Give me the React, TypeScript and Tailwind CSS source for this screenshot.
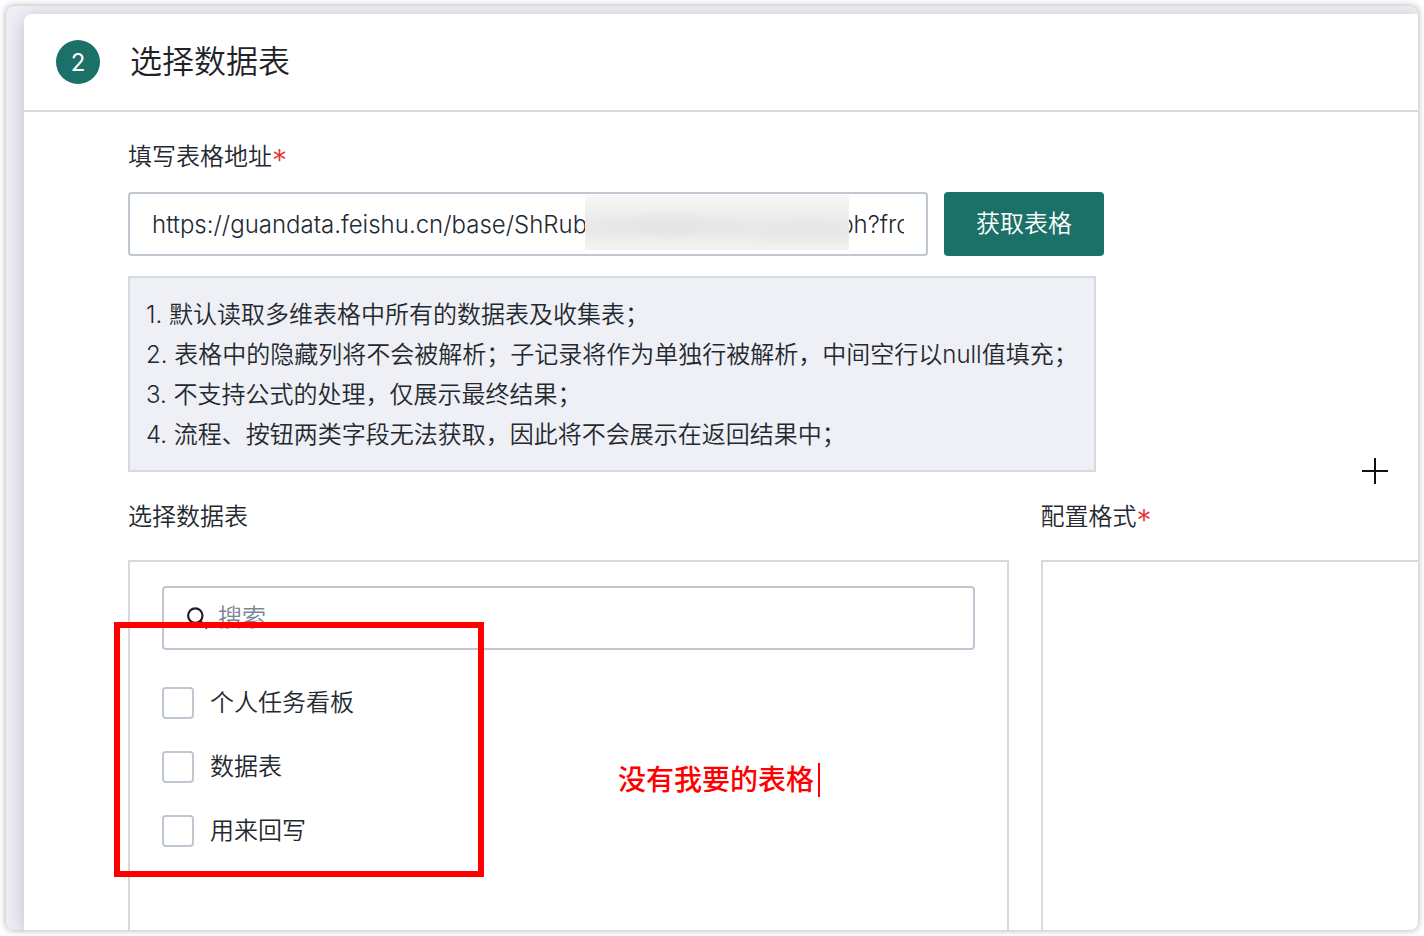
import React from "react";

const notes = [
  "默认读取多维表格中所有的数据表及收集表；",
  "表格中的隐藏列将不会被解析；子记录将作为单独行被解析，中间空行以null值填充；",
  "不支持公式的处理，仅展示最终结果；",
  "流程、按钮两类字段无法获取，因此将不会展示在返回结果中；",
];

const tables = ["个人任务看板", "数据表", "用来回写"];

const tableUrl =
  "https://guandata.feishu.cn/base/ShRub" + "\u2003".repeat(10) + "\u2002" + "ph?from=from_copylink";

function Required() {
  return <span className="align-[-6px] text-[30px] leading-none text-[#e53030]">*</span>;
}

function SearchIcon() {
  return (
    <svg viewBox="0 0 24 24" fill="none" className="size-6 shrink-0 text-[#1f2329]" stroke="currentColor" strokeWidth="2.2" aria-hidden="true">
      <circle cx="11.3" cy="9.6" r="7.2" />
      <path d="M16.2 14.8 L23 22.4" />
    </svg>
  );
}

function Header() {
  return (
    <header className="flex items-center gap-[30px] border-b-2 border-[#d5d9e0] px-8 py-[26px]">
      <span className="flex size-11 items-center justify-center rounded-full bg-[#1b7068] pt-px text-2xl font-normal text-white">2</span>
      <h1 className="text-[32px] leading-[44px] text-[#1f2329]">选择数据表</h1>
    </header>
  );
}

function AddressField() {
  return (
    <div>
      <label htmlFor="address" className="block h-10 leading-10">
        填写表格地址
        <Required />
      </label>
      <div className="mt-[15px] flex gap-4">
        <div className="relative w-full max-w-[800px]">
          <input
            id="address"
            type="text"
            defaultValue={tableUrl}
            className="block h-16 w-full rounded border-2 border-[#bfc7d2] bg-white px-[22px] outline-none"
          />
          <div className="absolute top-[3px] left-[457px] h-[55px] w-[264px] bg-[#efefef] bg-[radial-gradient(ellipse_at_32%_55%,#e3e4e5_0%,transparent_35%),radial-gradient(ellipse_at_84%_65%,#e6e7e7_0%,transparent_32%),linear-gradient(#f7f7f7,#ebebeb_45%,#e9e9e9_65%,#f3f3f3)]" />
        </div>
        <button type="button" className="h-16 w-40 shrink-0 rounded bg-[#1b7068] text-white">
          获取表格
        </button>
      </div>
    </div>
  );
}

function Notes() {
  return (
    <ol className="mt-5 w-full max-w-[968px] border-2 border-[#d5d9e0] bg-[#eff0f6] px-4 pt-[17px] pb-[15px] leading-10">
      {notes.map((note, i) => (
        <li key={note} className="whitespace-nowrap">
          {i + 1}. {note}
        </li>
      ))}
    </ol>
  );
}

function TablePicker() {
  return (
    <section className="flex min-w-0 flex-[7] flex-col">
      <h2 className="h-10 leading-10">选择数据表</h2>
      <div className="relative mt-[23px] flex-1 border-2 border-b-0 border-[#d5d9e0] px-8 pt-6">
        <label className="flex h-16 items-center gap-[10px] rounded border-2 border-[#bfc7d2] px-5">
          <SearchIcon />
          <input
            type="search"
            aria-label="搜索"
            placeholder="搜索"
            className="min-w-0 flex-1 bg-transparent outline-none placeholder:text-[#7d8694]"
          />
        </label>
        <ul className="mt-[21px]">
          {tables.map((name) => (
            <li key={name}>
              <label className="flex h-16 items-center gap-4">
                <input type="checkbox" className="size-8 shrink-0 appearance-none rounded border-2 border-[#bfc7d2] bg-white" />
                {name}
              </label>
            </li>
          ))}
        </ul>
        <div className="pointer-events-none absolute top-[60px] -left-4 h-[255px] w-[370px] border-6 border-[#ff0000]" />
        <p className="absolute top-[200px] left-[488px] flex items-center gap-1 text-[28px] leading-9 font-medium whitespace-nowrap text-[#ff0000]">
          没有我要的表格
          <span className="h-[34px] w-[2px] bg-[#ff0000]" />
        </p>
      </div>
    </section>
  );
}

function FormatPanel() {
  return (
    <section className="flex min-w-0 flex-[3] flex-col">
      <h2 className="h-10 leading-10">
        配置格式
        <Required />
      </h2>
      <div className="mt-[23px] flex-1 border-t-2 border-l-2 border-[#d5d9e0]" />
    </section>
  );
}

export default function App() {
  return (
    <div className="flex min-h-screen bg-white p-[6px] font-['Inter','Noto_Sans_CJK_SC',sans-serif] text-2xl font-[350] text-[#23292f]">
      <div className="flex flex-1 overflow-hidden rounded-lg bg-[#eff0f6] pt-2 pl-[18px] shadow-[0_0_7px_rgba(0,0,0,0.35)]">
        <main className="relative flex min-w-0 flex-1 flex-col rounded-tl-lg bg-white shadow-[0_4px_20px_rgba(30,35,50,0.24)]">
          <Header />
          <div className="flex flex-1 flex-col pt-[25px] pl-[104px]">
            <AddressField />
            <Notes />
            <div className="mt-[25px] flex flex-1 gap-8">
              <TablePicker />
              <FormatPanel />
            </div>
          </div>
          <svg viewBox="0 0 26 26" className="absolute top-[444px] right-[30px] size-[26px] text-[#111111]" stroke="currentColor" strokeWidth="2" aria-hidden="true">
            <path d="M13 0V26M0 13H26" />
          </svg>
        </main>
      </div>
    </div>
  );
}
